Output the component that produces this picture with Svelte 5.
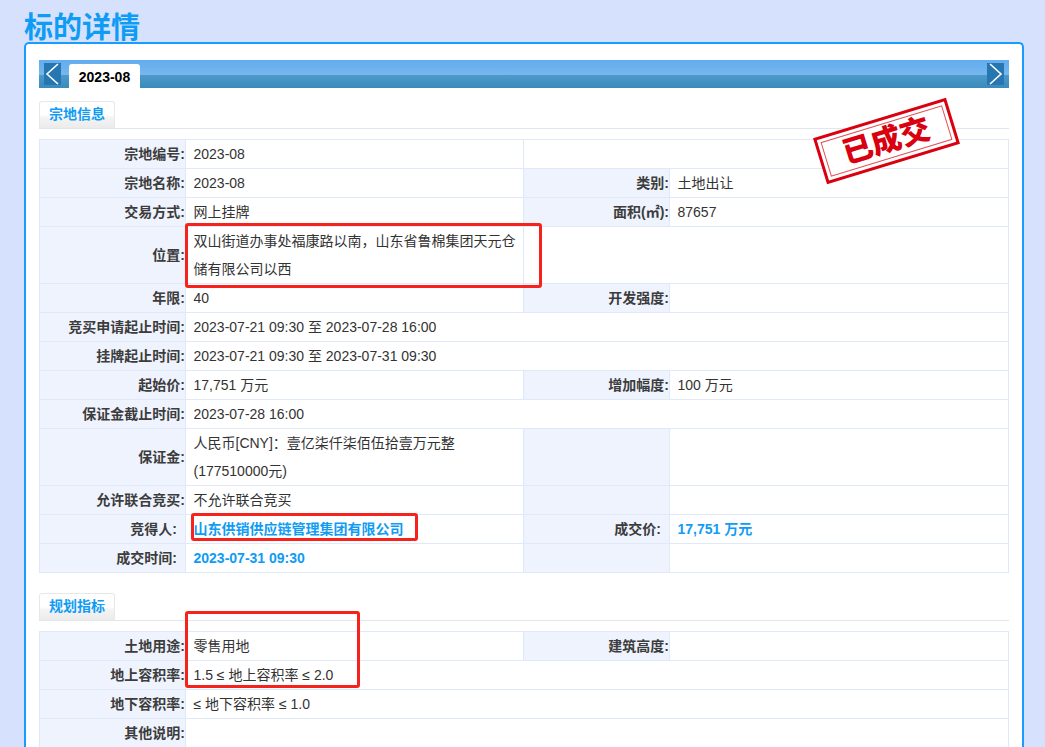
<script lang="ts">
  const landRows = [
    { cells: [["宗地编号:", "2023-08"]], blankRight: true },
    { cells: [["宗地名称:", "2023-08"], ["类别:", "土地出让"]] },
    { cells: [["交易方式:", "网上挂牌"], ["面积(㎡):", "87657"]] },
    { cells: [["位置:", "双山街道办事处福康路以南，山东省鲁棉集团天元仓储有限公司以西"]], tall: true, blankRight: true },
    { cells: [["年限:", "40"], ["开发强度:", ""]] },
    { cells: [["竞买申请起止时间:", "2023-07-21 09:30 至 2023-07-28 16:00"]] },
    { cells: [["挂牌起止时间:", "2023-07-21 09:30 至 2023-07-31 09:30"]] },
    { cells: [["起始价:", "17,751 万元"], ["增加幅度:", "100 万元"]] },
    { cells: [["保证金截止时间:", "2023-07-28 16:00"]] },
    { cells: [["保证金:", "人民币[CNY]：壹亿柒仟柒佰伍拾壹万元整 (177510000元)"], ["", ""]], tall: true },
    { cells: [["允许联合竞买:", "不允许联合竞买"], ["", ""]] },
    { cells: [["竞得人:", "山东供销供应链管理集团有限公司"], ["成交价:", "17,751 万元"]], strong: true },
    { cells: [["成交时间:", "2023-07-31 09:30"], ["", ""]], strong: true }
  ];

  const planRows = [
    { cells: [["土地用途:", "零售用地"], ["建筑高度:", ""]] },
    { cells: [["地上容积率:", "1.5 ≤ 地上容积率 ≤ 2.0"]] },
    { cells: [["地下容积率:", "≤ 地下容积率 ≤ 1.0"]] },
    { cells: [["其他说明:", ""]] }
  ];
</script>

{#snippet infoTable(rows)}
  <table class="info">
    <colgroup>
      <col style="width:146px" />
      <col style="width:338px" />
      <col style="width:146px" />
      <col />
    </colgroup>
    <tbody>
      {#each rows as row}
        <tr class:tall={row.tall} class:strong={row.strong}>
          <th>{row.cells[0][0]}</th>
          {#if row.blankRight}
            <td>{row.cells[0][1]}</td>
            <td class="blank" colspan="2"></td>
          {:else if row.cells.length === 1}
            <td colspan="3">{row.cells[0][1]}</td>
          {:else}
            <td>{row.cells[0][1]}</td>
            <th>{row.cells[1][0]}</th>
            <td>{row.cells[1][1]}</td>
          {/if}
        </tr>
      {/each}
    </tbody>
  </table>
{/snippet}

<div class="page">
  <h1>标的详情</h1>
  <div class="panel">
    <div class="tabbar">
      <span class="arrow">
        <svg width="17" height="22" viewBox="0 0 17 22"><path d="M14 1 L3 11 L14 21" fill="none" stroke="#fff" stroke-width="1.6" /></svg>
      </span>
      <span class="tab">2023-08</span>
      <span class="arrow right">
        <svg width="17" height="22" viewBox="0 0 17 22"><path d="M3 1 L14 11 L3 21" fill="none" stroke="#fff" stroke-width="1.6" /></svg>
      </span>
    </div>

    <div class="section-head"><span>宗地信息</span></div>
    {@render infoTable(landRows)}

    <div class="section-head second"><span>规划指标</span></div>
    {@render infoTable(planRows)}

    <div class="stamp"><span>已成交</span></div>
  </div>

  <i class="mark m1"></i>
  <i class="mark m2"></i>
  <i class="mark m3"></i>
</div>

<style>
  :global(html), :global(body) {
    margin: 0;
    height: 100%;
    overflow: hidden;
    background: #d6e2fd;
  }

  .page {
    position: relative;
    height: 747px;
    overflow: hidden;
    padding: 0 21px 0 24px;
    font-family: "Liberation Sans", "Noto Sans CJK SC", sans-serif;
    font-size: 14px;
    color: #333;
  }

  h1 {
    margin: 0;
    height: 42px;
    padding-top: 11px;
    box-sizing: border-box;
    font-size: 29px;
    line-height: 34px;
    font-weight: bold;
    color: #0f9cf5;
    white-space: nowrap;
  }

  .panel {
    position: relative;
    background: #fff;
    border: 2px solid #1a9bff;
    border-bottom: none;
    border-radius: 5px 5px 0 0;
    padding: 16px 13px 0;
    height: 800px;
  }

  .tabbar {
    display: flex;
    align-items: flex-end;
    height: 28px;
    padding: 0 5px;
    background: linear-gradient(#62acf0 0, #77b7ec 15px, #4b9acb 15px, #3a8aba 100%);
  }

  .arrow {
    align-self: flex-start;
    display: flex;
    width: 17px;
    height: 22px;
    margin-top: 3px;
    background: #2677b1;
  }

  .arrow.right {
    margin-left: auto;
  }

  .tab {
    margin-left: 8px;
    width: 71px;
    height: 24px;
    background: #fff;
    border-radius: 3px 3px 0 0;
    text-align: center;
    font-weight: bold;
    line-height: 26px;
    color: #000;
  }

  .section-head {
    margin: 13px 0 10px;
    height: 27px;
    border-bottom: 1px solid #e3e6ec;
  }

  .section-head.second {
    margin-top: 20px;
  }

  .section-head span {
    display: block;
    box-sizing: border-box;
    width: 76px;
    height: 100%;
    text-align: center;
    line-height: 25px;
    font-weight: bold;
    color: #0f9cf5;
    border: 1px solid #e8e8e8;
    border-bottom: none;
    border-radius: 3px 3px 0 0;
    background: linear-gradient(#fff 0, #fff 50%, #f4f4f4 60%, #ebebeb 100%);
  }

  .info {
    width: 970px;
    table-layout: fixed;
    border-collapse: collapse;
  }

  .info th, .info td {
    height: 28px;
    padding: 0;
    border: 1px solid #dfe9f9;
    font-size: 14px;
    line-height: 28px;
    vertical-align: middle;
  }

  .info tr.tall td, .info tr.tall th {
    height: 56px;
  }

  .info th {
    text-align: right;
    font-weight: bold;
    color: #3c3c3c;
    background: #eef3fe;
  }

  .info tr.strong th {
    padding-right: 8px;
  }

  .info td {
    padding-left: 7.5px;
    padding-right: 6.5px;
    background: #fff;
  }

  .info tr.strong td {
    font-weight: bold;
    color: #0f9cf5;
  }

  .stamp {
    position: absolute;
    left: 791px;
    top: 73px;
    width: 139px;
    height: 48px;
    box-sizing: border-box;
    background: #fff;
    border: 3px solid #d9000f;
    outline: 1px solid #e0505a;
    outline-offset: -7px;
    transform: rotate(-17deg);
    display: flex;
    align-items: center;
    justify-content: center;
    font-family: "Liberation Serif", "Noto Sans CJK SC", serif;
    font-size: 30px;
    font-weight: 900;
    line-height: 1;
    color: #d9000f;
  }

  .mark {
    position: absolute;
    box-sizing: border-box;
    border: 3px solid #f6231c;
    border-radius: 3px;
    pointer-events: none;
  }

  .m1 { left: 185px; top: 223px; width: 357px; height: 65px; }
  .m2 { left: 191px; top: 513px; width: 227px; height: 28px; }
  .m3 { left: 185px; top: 611px; width: 175px; height: 77px; }
</style>
